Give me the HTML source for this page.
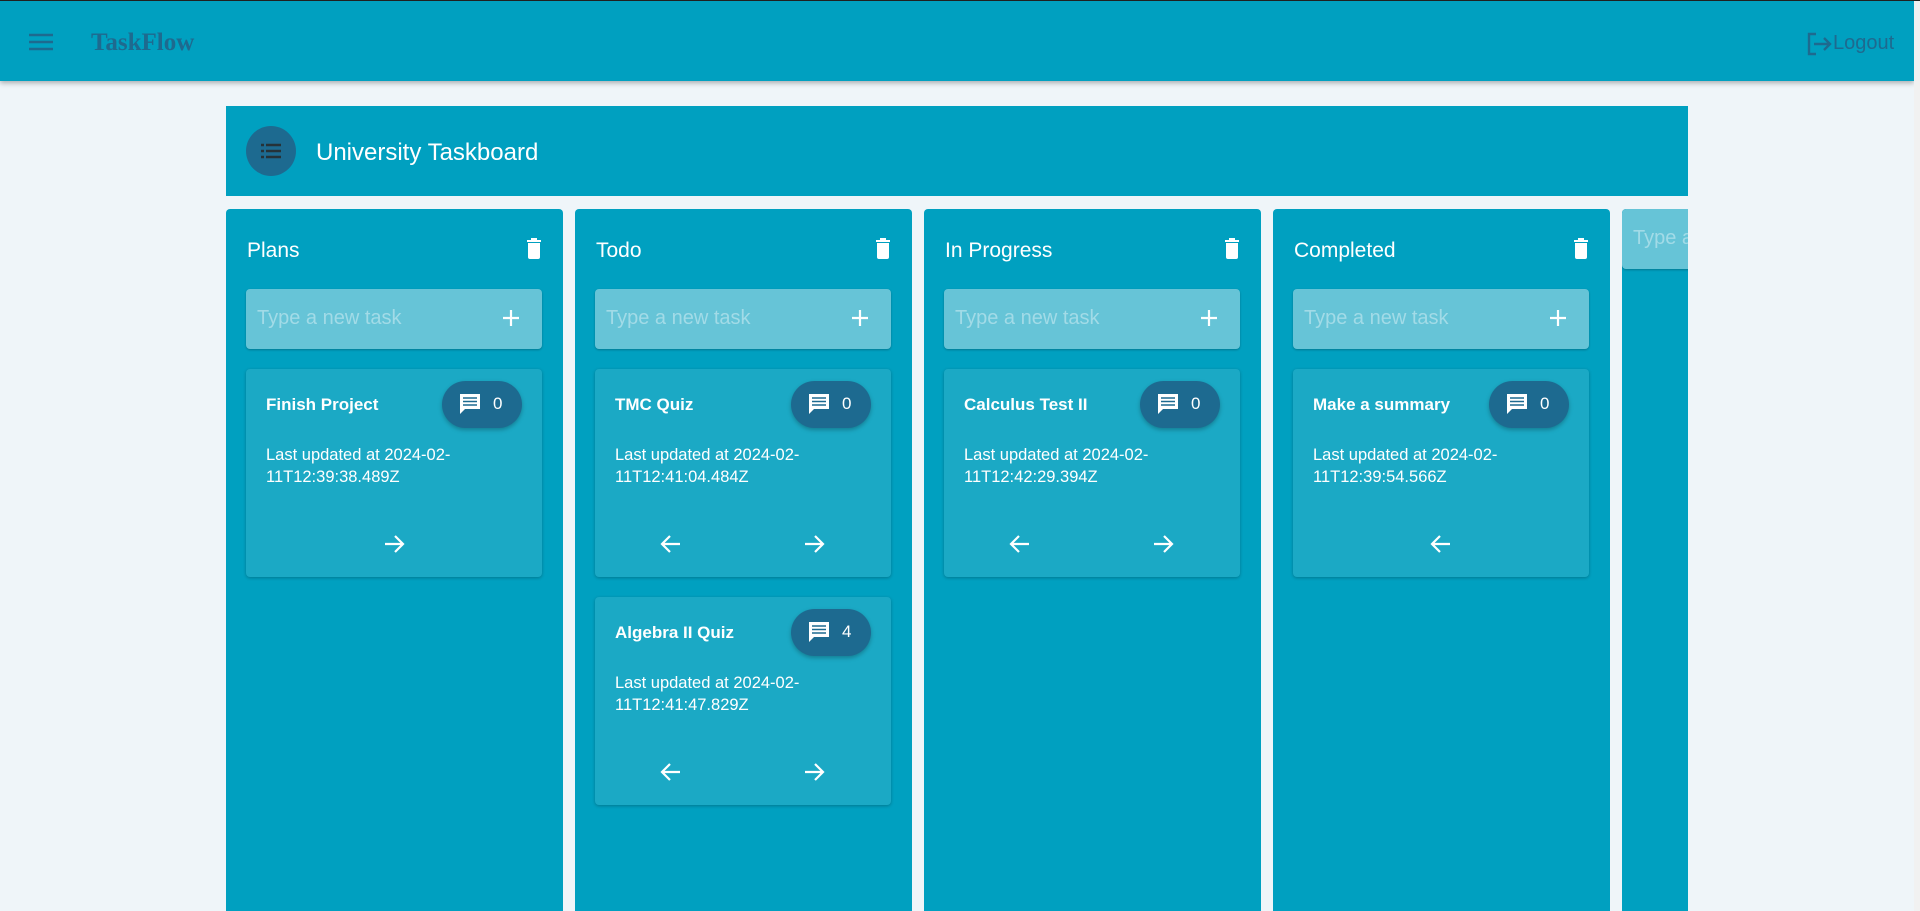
<!DOCTYPE html>
<html><head><meta charset="utf-8"><style>
*{box-sizing:border-box;margin:0;padding:0}
body{width:1920px;height:911px;overflow:hidden;background:#eff5f9;font-family:"Liberation Sans",sans-serif;position:relative}
.topline{position:absolute;left:0;top:0;width:1920px;height:1px;background:#222}
.hdr{position:absolute;left:0;top:1px;width:1914px;height:80px;background:#00a0c0;box-shadow:0 2px 5px rgba(0,0,0,.3)}
.sb{position:absolute;right:0;top:1px;width:6px;height:910px;background:#f1f1f1}
.abs{position:absolute}
.board{position:absolute;left:226px;top:106px;width:1462px;height:90px;background:#00a0c0}
.col{position:absolute;top:209px;width:337px;height:702px;background:#00a0c0;border-radius:4px 4px 0 0}
.ctitle{position:absolute;left:21px;top:30px;color:#fff;font-size:21px;font-weight:300}
.trash{position:absolute;left:300px;top:28px}
.inp{position:absolute;left:20px;top:80px;width:296px;height:60px;background:#66c4d7;border-radius:4px;box-shadow:0 1px 2px rgba(0,0,0,.25)}
.inp span{position:absolute;left:11px;top:18px;font-size:20px;color:#a2dbe7}
.inp svg{position:absolute;left:255px;top:19px}
.card{position:absolute;left:20px;width:296px;height:208px;background:#1ba9c5;border-radius:4px;box-shadow:0 1px 3px rgba(0,0,0,.25)}
.card .t{position:absolute;left:20px;top:26px;color:#fff;font-size:17px;font-weight:bold}
.pill{position:absolute;left:196px;top:12px;width:80px;height:47px;border-radius:24px;background:#1d6a90;box-shadow:0 2px 4px rgba(0,0,0,.25)}
.pill svg{position:absolute;left:17px;top:12px}
.pill b{position:absolute;left:51px;top:13px;color:#fff;font-size:17px;font-weight:normal}
.card .u{position:absolute;left:20px;top:75px;color:#fff;font-size:16.5px;line-height:22px;font-weight:300}
.ar{position:absolute;top:164px}
</style></head><body>
<div class="topline"></div>
<div class="hdr">
 <svg class="abs" style="left:29px;top:32px" width="24" height="18" viewBox="0 0 24 18"><path d="M0 2h24M0 9h24M0 16h24" stroke="#1e6a8f" stroke-width="2.4"/></svg>
 <div class="abs" style="left:91px;top:28px;font-family:'Liberation Serif',serif;font-weight:bold;font-size:25px;color:#1e6a8f">TaskFlow</div>
 <svg class="abs" style="left:1806px;top:31px" width="26" height="24" viewBox="0 0 26 24"><path d="M10 2H3v20h7" fill="none" stroke="#1e6a8f" stroke-width="2.4"/><path d="M8 12h16M18 6l6 6-6 6" fill="none" stroke="#1e6a8f" stroke-width="2.4"/></svg>
 <div class="abs" style="left:1833px;top:31px;font-size:20px;color:#1e6a8f">Logout</div>
</div>
<div class="sb"></div>
<div class="board">
 <div class="abs" style="left:20px;top:20px;width:50px;height:50px;border-radius:50%;background:#1d6a90"></div>
 <svg class="abs" style="left:35px;top:37px" width="20" height="16" viewBox="0 0 20 16"><path d="M0 2h3M5 2h15M0 8h3M5 8h15M0 14h3M5 14h15" stroke="#263238" stroke-width="2.4"/></svg>
 <div class="abs" style="left:90px;top:33px;font-size:24px;color:#fff">University Taskboard</div>
</div>

<div class="col" style="left:226px">
 <div class="ctitle">Plans</div>
 <svg class="trash" width="16" height="22" viewBox="0 0 16 22"><path d="M1 3h14v2H1zM5 1h6v2H5z" fill="#fff"/><path d="M2 6h12v14a2 2 0 0 1-2 2H4a2 2 0 0 1-2-2z" fill="#fff"/></svg>
 <div class="inp"><span>Type a new task</span><svg width="20" height="20" viewBox="0 0 20 20"><path d="M10 2v16M2 10h16" stroke="#fff" stroke-width="2.2"/></svg></div>
 <div class="card" style="top:160px">
  <div class="t">Finish Project</div>
  <div class="pill"><svg width="22" height="22" viewBox="0 0 22 22"><path d="M1 1h20v15H6l-5 5z" fill="#fff"/><path d="M4 5h14M4 8.5h14M4 12h14" stroke="#1d6a90" stroke-width="1.4"/></svg><b>0</b></div>
  <div class="u">Last updated at 2024-02-<br>11T12:39:38.489Z</div>
  <svg class="ar" style="left:137px" width="22" height="22" viewBox="0 0 22 22"><path d="M2 11h18M12 3l8 8-8 8" fill="none" stroke="#fff" stroke-width="2.2"/></svg>
 </div>
</div>

<div class="col" style="left:575px">
 <div class="ctitle">Todo</div>
 <svg class="trash" width="16" height="22" viewBox="0 0 16 22"><path d="M1 3h14v2H1zM5 1h6v2H5z" fill="#fff"/><path d="M2 6h12v14a2 2 0 0 1-2 2H4a2 2 0 0 1-2-2z" fill="#fff"/></svg>
 <div class="inp"><span>Type a new task</span><svg width="20" height="20" viewBox="0 0 20 20"><path d="M10 2v16M2 10h16" stroke="#fff" stroke-width="2.2"/></svg></div>
 <div class="card" style="top:160px">
  <div class="t">TMC Quiz</div>
  <div class="pill"><svg width="22" height="22" viewBox="0 0 22 22"><path d="M1 1h20v15H6l-5 5z" fill="#fff"/><path d="M4 5h14M4 8.5h14M4 12h14" stroke="#1d6a90" stroke-width="1.4"/></svg><b>0</b></div>
  <div class="u">Last updated at 2024-02-<br>11T12:41:04.484Z</div>
  <svg class="ar" style="left:65px" width="22" height="22" viewBox="0 0 22 22"><path d="M20 11H2M10 3l-8 8 8 8" fill="none" stroke="#fff" stroke-width="2.2"/></svg>
  <svg class="ar" style="left:208px" width="22" height="22" viewBox="0 0 22 22"><path d="M2 11h18M12 3l8 8-8 8" fill="none" stroke="#fff" stroke-width="2.2"/></svg>
 </div>
 <div class="card" style="top:388px">
  <div class="t">Algebra II Quiz</div>
  <div class="pill"><svg width="22" height="22" viewBox="0 0 22 22"><path d="M1 1h20v15H6l-5 5z" fill="#fff"/><path d="M4 5h14M4 8.5h14M4 12h14" stroke="#1d6a90" stroke-width="1.4"/></svg><b>4</b></div>
  <div class="u">Last updated at 2024-02-<br>11T12:41:47.829Z</div>
  <svg class="ar" style="left:65px" width="22" height="22" viewBox="0 0 22 22"><path d="M20 11H2M10 3l-8 8 8 8" fill="none" stroke="#fff" stroke-width="2.2"/></svg>
  <svg class="ar" style="left:208px" width="22" height="22" viewBox="0 0 22 22"><path d="M2 11h18M12 3l8 8-8 8" fill="none" stroke="#fff" stroke-width="2.2"/></svg>
 </div>
</div>

<div class="col" style="left:924px">
 <div class="ctitle">In Progress</div>
 <svg class="trash" width="16" height="22" viewBox="0 0 16 22"><path d="M1 3h14v2H1zM5 1h6v2H5z" fill="#fff"/><path d="M2 6h12v14a2 2 0 0 1-2 2H4a2 2 0 0 1-2-2z" fill="#fff"/></svg>
 <div class="inp"><span>Type a new task</span><svg width="20" height="20" viewBox="0 0 20 20"><path d="M10 2v16M2 10h16" stroke="#fff" stroke-width="2.2"/></svg></div>
 <div class="card" style="top:160px">
  <div class="t">Calculus Test II</div>
  <div class="pill"><svg width="22" height="22" viewBox="0 0 22 22"><path d="M1 1h20v15H6l-5 5z" fill="#fff"/><path d="M4 5h14M4 8.5h14M4 12h14" stroke="#1d6a90" stroke-width="1.4"/></svg><b>0</b></div>
  <div class="u">Last updated at 2024-02-<br>11T12:42:29.394Z</div>
  <svg class="ar" style="left:65px" width="22" height="22" viewBox="0 0 22 22"><path d="M20 11H2M10 3l-8 8 8 8" fill="none" stroke="#fff" stroke-width="2.2"/></svg>
  <svg class="ar" style="left:208px" width="22" height="22" viewBox="0 0 22 22"><path d="M2 11h18M12 3l8 8-8 8" fill="none" stroke="#fff" stroke-width="2.2"/></svg>
 </div>
</div>

<div class="col" style="left:1273px">
 <div class="ctitle">Completed</div>
 <svg class="trash" width="16" height="22" viewBox="0 0 16 22"><path d="M1 3h14v2H1zM5 1h6v2H5z" fill="#fff"/><path d="M2 6h12v14a2 2 0 0 1-2 2H4a2 2 0 0 1-2-2z" fill="#fff"/></svg>
 <div class="inp"><span>Type a new task</span><svg width="20" height="20" viewBox="0 0 20 20"><path d="M10 2v16M2 10h16" stroke="#fff" stroke-width="2.2"/></svg></div>
 <div class="card" style="top:160px">
  <div class="t">Make a summary</div>
  <div class="pill"><svg width="22" height="22" viewBox="0 0 22 22"><path d="M1 1h20v15H6l-5 5z" fill="#fff"/><path d="M4 5h14M4 8.5h14M4 12h14" stroke="#1d6a90" stroke-width="1.4"/></svg><b>0</b></div>
  <div class="u">Last updated at 2024-02-<br>11T12:39:54.566Z</div>
  <svg class="ar" style="left:137px" width="22" height="22" viewBox="0 0 22 22"><path d="M20 11H2M10 3l-8 8 8 8" fill="none" stroke="#fff" stroke-width="2.2"/></svg>
 </div>
</div>

<div class="abs" style="left:1622px;top:209px;width:66px;height:702px;background:#00a0c0;overflow:hidden;border-radius:4px 0 0 0">
 <div class="abs" style="left:0;top:0;width:100px;height:60px;background:#66c4d7;border-radius:4px;box-shadow:0 1px 2px rgba(0,0,0,.25)"></div>
 <div class="abs" style="left:11px;top:18px;font-size:20px;color:#a2dbe7;white-space:nowrap">Type a new list</div>
</div>
</body></html>
